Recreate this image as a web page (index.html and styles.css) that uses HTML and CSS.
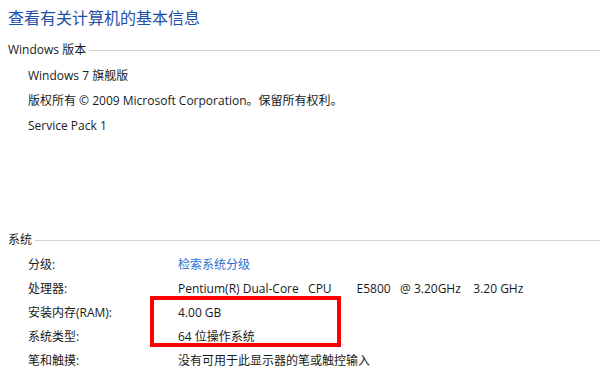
FILE: index.html
```html
<!DOCTYPE html>
<html lang="zh-CN">
<head>
    <meta charset="UTF-8">
    <title>系统</title>
    <link rel="stylesheet" href="styles.css">
</head>
<body>
    <h1 class="title">查看有关计算机的基本信息</h1>

    <div class="section edition">
        <div class="section-head">Windows 版本</div>
        <div class="line">Windows 7 旗舰版</div>
        <div class="line">版权所有 © 2009 Microsoft Corporation。保留所有权利。</div>
        <div class="line">Service Pack 1</div>
    </div>

    <div class="section system">
        <div class="section-head">系统</div>
        <div class="props">
            <div class="label">分级:</div>
            <div class="value"><a class="link" href="#">检索系统分级</a></div>
            <div class="label">处理器:</div>
            <div class="value pre">Pentium(R) Dual-Core   CPU        E5800   @ 3.20GHz    3.20 GHz</div>
            <div class="label">安装内存(RAM):</div>
            <div class="value">4.00 GB</div>
            <div class="label">系统类型:</div>
            <div class="value">64 位操作系统</div>
            <div class="label">笔和触摸:</div>
            <div class="value">没有可用于此显示器的笔或触控输入</div>
        </div>
        <div class="highlight"></div>
    </div>
</body>
</html>
```

FILE: styles.css
```css
body {
    margin: 0;
    padding: 0 0 0 8px;
    font-family: "Open Sans", "Noto Sans CJK SC", sans-serif;
    font-size: 12px;
    color: #1a1a1a;
    background: #fff;
}
.title {
    margin: 6px 0 0 0;
    font-family: "Noto Sans CJK SC", sans-serif;
    font-size: 16px;
    font-weight: normal;
    line-height: 22px;
    color: #1e4ea6;
}
.section-head {
    display: flex;
    align-items: center;
    height: 20px;
    gap: 3px;
}
.section-head::after {
    content: "";
    flex: 1;
    height: 1px;
    margin-top: 3px;
    background: #d2d2d2;
}
.edition {
    margin-top: 11px;
}
.edition .line {
    padding-left: 20px;
    height: 25px;
    line-height: 25px;
}
.edition .section-head {
    margin-bottom: 4px;
}
.system {
    position: relative;
    margin-top: 91px;
}
.system .section-head {
    margin-bottom: 3px;
}
.props {
    display: grid;
    grid-template-columns: 150px 1fr;
    grid-auto-rows: 24px;
    align-items: center;
    padding-left: 20px;
}
.pre {
    white-space: pre;
}
.link {
    color: #2d6fd0;
    text-decoration: none;
}
.highlight {
    position: absolute;
    left: 142px;
    top: 67px;
    width: 183px;
    height: 43px;
    border: 4px solid #ff0000;
}
```
